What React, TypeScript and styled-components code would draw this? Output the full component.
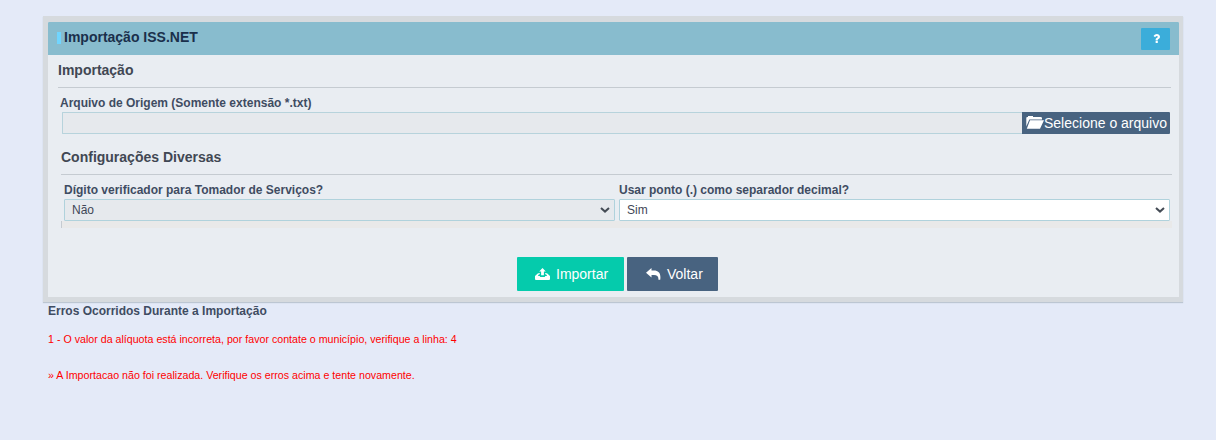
import React from "react";
import styled, { createGlobalStyle } from "styled-components";

const GlobalStyle = createGlobalStyle`
  * { box-sizing: border-box; }
  body {
    margin: 0;
    background: #e4eaf8;
    color: #3f4757;
    font-family: "Liberation Sans", Arial, sans-serif;
  }
`;

const Page = styled.main`
  min-height: 440px;
  padding: 16px 33px 0 43px;
`;

const Panel = styled.section`
  height: 286px;
  border: solid #d6dade;
  border-width: 6px 4px 5px 5px;
  background: #e9edf2;
  box-shadow: 0 1px 1px #bcc6d2;
`;

const Header = styled.header`
  display: flex;
  align-items: flex-start;
  height: 33px;
  padding: 0 9px;
  background: #88bcce;
  border-radius: 1px 1px 0 0;
`;

const Accent = styled.span`
  width: 4px;
  height: 12px;
  margin: 10px 3px 0 0;
  background: #70d5ff;
`;

const Title = styled.h1`
  flex: 1;
  margin: 7px 0 0;
  font-size: 14px;
  line-height: 16px;
  color: #1a2f4b;
`;

const HelpButton = styled.button`
  display: flex;
  align-items: center;
  justify-content: center;
  width: 29px;
  height: 22px;
  margin-top: 6px;
  padding: 0 0 1px 1px;
  border: 0;
  border-radius: 1px;
  background: #3badda;
  color: #fff;
`;

const Section = styled.section<{ $left: number; $right: number }>`
  padding: 0 ${(p) => p.$right}px 0 ${(p) => p.$left}px;
`;

const SectionTitle = styled.h2<{ $top: number; $height: number }>`
  height: ${(p) => p.$height}px;
  margin: 0;
  padding-top: ${(p) => p.$top}px;
  border-bottom: 1px solid #c5cbd1;
  font-size: 14px;
  line-height: 16px;
  color: #414753;
`;

const Label = styled.label`
  display: block;
  height: 14px;
  font-size: 12px;
  line-height: 14px;
  font-weight: bold;
  white-space: nowrap;
  color: #3f4c62;
`;

const FileField = styled.div`
  padding: 8px 1px 0 2px;
`;

const FileRow = styled.div`
  display: flex;
  height: 22px;
  margin: 2px 0 0 2px;
`;

const FileInput = styled.input`
  flex: 1;
  min-width: 0;
  border: 1px solid #b7d3dc;
  border-right: 0;
  border-radius: 1px 0 0 1px;
  background: #e6e9ed;
`;

const FileButton = styled.button`
  display: flex;
  align-items: center;
  width: 148px;
  padding: 0 0 0 4px;
  border: 0;
  border-radius: 0 1px 1px 0;
  background: #486380;
  color: #fff;
  font: 14px "Liberation Sans", Arial, sans-serif;
  white-space: nowrap;
`;

const SelectGrid = styled.div`
  display: grid;
  grid-template-columns: 551px 551px;
  column-gap: 4px;
  padding: 8px 0 0 3px;
`;

const Select = styled.div<{ $muted?: boolean }>`
  display: flex;
  align-items: center;
  justify-content: space-between;
  height: 22px;
  margin-top: 2px;
  padding: 0 4px 0 7px;
  border: 1px solid #b0d2dc;
  border-radius: 1px;
  background: ${(p) => (p.$muted ? "#e6e9ed" : "#fff")};
  font-size: 12px;
  line-height: 14px;
  color: #3f4757;
`;

const Strip = styled.div`
  height: 7px;
  border-left: 1px solid #c5cbd1;
  background: #e9e9e9;
`;

const Actions = styled.div`
  display: flex;
  justify-content: center;
  gap: 3px;
  padding: 29px 0 0 9px;
  margin-right: 1px;
`;

const ActionButton = styled.button<{ $color: string; $width: number; $indent: number }>`
  display: flex;
  align-items: center;
  width: ${(p) => p.$width}px;
  height: 34px;
  padding: 0 0 0 ${(p) => p.$indent}px;
  gap: 6px;
  border: 0;
  border-radius: 1px;
  background: ${(p) => p.$color};
  color: #fff;
  font: 14px "Liberation Sans", Arial, sans-serif;
`;

const ErrorTitle = styled.h3`
  margin: 2px 0 0 5px;
  font-size: 12px;
  line-height: 14px;
  color: #3f4c62;
`;

const ErrorText = styled.p<{ $top: number }>`
  margin: ${(p) => p.$top}px 0 0 5px;
  font-size: 10.67px;
  line-height: 13px;
  color: #f00;
`;

const Icon = ({ d, w, h, box }: { d: string; w: number; h: number; box?: string }) => (
  <svg
    width={w}
    height={h}
    viewBox={box ?? `0 0 ${w} ${h}`}
    preserveAspectRatio="none"
    fill="currentColor"
    aria-hidden="true"
  >
    <path d={d} />
  </svg>
);

const FOLDER =
  "M.3 10.500V1.800Q.3 1 1.500 1H2V0H7V1H14.500Q16 1 16 2.300V3.500H3.300ZM4 4.200H18L14 12.700H.8Z";
const UPLOAD =
  "M7.500 0L10.800 3.600H8.900V7.200H6.100V3.600H4.200ZM3 5.300H5V6.300H4L2.800 8H4.700L5.300 9H9.700L10.300 8H12.200L11 6.300H10V5.300H12L15 8V11Q15 12 14 12H1Q0 12 0 11V8Z";
const REPLY = "M0 4.800L5.500 0V2.500H8C12.600 2.500 15.200 5.500 14.200 11.700H12.400C12.700 8.600 11.300 7.100 8 7.100H5.500V9.600Z";
const QUESTION =
  "M1088 1256v240q0 16-12 28t-28 12h-240q-16 0-28-12t-12-28v-240q0-16 12-28t28-12h240q16 0 28 12t12 28zm316-600q0 54-15.500 101t-35 76.500-55 59.500-57.500 43.500-61 35.500q-41 23-68.500 65t-27.500 67q0 17-12 32.500t-28 15.500h-240q-15 0-25.500-18.500t-10.500-37.500v-45q0-83 65-156.500t143-108.500q59-27 84-56t25-76q0-42-46.500-74t-107.500-32q-65 0-108 29-35 25-107 115-13 16-31 16-12 0-25-8l-164-125q-13-10-15.500-25t5.500-28q160-266 464-266 80 0 161 31t146 83 106 127.500 41 158.500z";

const Chevron = () => (
  <svg width="10" height="6" viewBox="0 0 10 6" fill="none" aria-hidden="true">
    <path d="M1 1l4 3.600L9 1" stroke="#444b55" strokeWidth="2" />
  </svg>
);

export default function App() {
  return (
    <Page>
      <GlobalStyle />
      <Panel>
        <Header>
          <Accent />
          <Title>Importação ISS.NET</Title>
          <HelpButton aria-label="Ajuda">
            <Icon d={QUESTION} w={7} h={9} box="384 256 1024 1280" />
          </HelpButton>
        </Header>
        <Section $left={10} $right={8}>
          <SectionTitle $top={7} $height={33}>Importação</SectionTitle>
          <FileField>
            <Label>Arquivo de Origem (Somente extensão *.txt)</Label>
            <FileRow>
              <FileInput readOnly />
              <FileButton>
                <Icon d={FOLDER} w={18} h={14} />
                Selecione o arquivo
              </FileButton>
            </FileRow>
          </FileField>
        </Section>
        <Section $left={13} $right={7}>
          <SectionTitle $top={15} $height={41}>Configurações Diversas</SectionTitle>
          <SelectGrid>
            <div>
              <Label>Dígito verificador para Tomador de Serviços?</Label>
              <Select $muted>Não<Chevron /></Select>
            </div>
            <div>
              <Label>Usar ponto (.) como separador decimal?</Label>
              <Select>Sim<Chevron /></Select>
            </div>
          </SelectGrid>
          <Strip />
        </Section>
        <Actions>
          <ActionButton $color="#05cbac" $width={107} $indent={18}>
            <Icon d={UPLOAD} w={15} h={12} />
            Importar
          </ActionButton>
          <ActionButton $color="#486380" $width={91} $indent={19}>
            <Icon d={REPLY} w={15} h={12} />
            Voltar
          </ActionButton>
        </Actions>
      </Panel>
      <ErrorTitle>Erros Ocorridos Durante a Importação</ErrorTitle>
      <ErrorText $top={15}>
        1 - O valor da alíquota está incorreta, por favor contate o município, verifique a linha: 4
      </ErrorText>
      <ErrorText $top={23}>» A Importacao não foi realizada. Verifique os erros acima e tente novamente.</ErrorText>
    </Page>
  );
}
